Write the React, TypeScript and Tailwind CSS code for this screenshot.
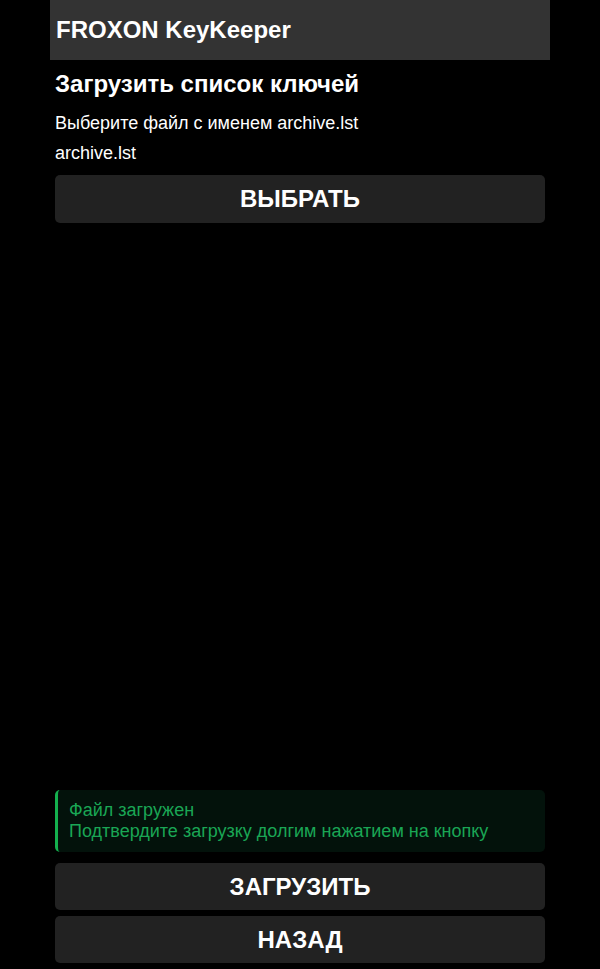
export default function App() {
	return (
		<div className="h-screen w-full bg-black" style={{ fontFamily: '"Liberation Sans", Arial, sans-serif' }}>
			<div className="mx-auto flex h-full w-[500px] flex-col text-white">
				<header className="flex h-[60px] shrink-0 items-center bg-[#333333] px-[6px]">
					<h1 className="text-[24px] font-bold">FROXON KeyKeeper</h1>
				</header>

				<main className="flex flex-1 flex-col px-[5px] pb-[6px]">
					<h2 className="mt-[10px] text-[24px] leading-[28px] font-bold">Загрузить список ключей</h2>
					<p className="mt-[15px] text-[18px] leading-[21px]">Выберите файл с именем archive.lst</p>
					<p className="mt-[9px] text-[18px] leading-[21px]">archive.lst</p>
					<button className="mt-[11px] h-[48px] w-full rounded-[5px] bg-[#222222] text-[24px] font-bold text-white">
						ВЫБРАТЬ
					</button>

					<div className="flex-1" />

					<div className="rounded-[5px] border-l-[3px] border-[#14b04e] bg-[#03120b] py-[10px] pr-3 pl-[11px] text-[18px] leading-[21px] text-[#1aa655]">
						<div>Файл загружен</div>
						<div>Подтвердите загрузку долгим нажатием на кнопку</div>
					</div>

					<button className="mt-[11px] h-[47px] w-full rounded-[5px] bg-[#222222] text-[24px] font-bold text-white">
						ЗАГРУЗИТЬ
					</button>
					<button className="mt-[6px] h-[47px] w-full rounded-[5px] bg-[#222222] text-[24px] font-bold text-white">
						НАЗАД
					</button>
				</main>
			</div>
		</div>
	);
}
